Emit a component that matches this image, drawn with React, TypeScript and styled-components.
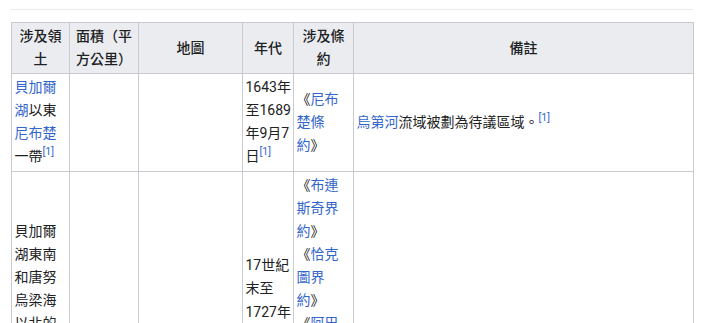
import React from "react";
import styled, { createGlobalStyle } from "styled-components";

const Global = createGlobalStyle`
  html, body { margin: 0; padding: 0; background: #ffffff; }
  body {
    font-family: Roboto, "Noto Sans CJK TC", "Noto Sans CJK SC", sans-serif;
    color: #202122;
    font-size: 14px;
  }
`;

const Page = styled.div`
  width: 683px;
  padding: 9px 0 0 10px;
`;

const Rule = styled.div`
  height: 1px;
  background: #eaecf0;
  margin-bottom: 12px;
`;

const Table = styled.table`
  margin-left: 1px;
  width: 682px;
  table-layout: fixed;
  border-collapse: collapse;
  background: #ffffff;
  font-size: 14px;
  line-height: 23.1px;
  color: #202122;
`;

const Th = styled.th`
  background: #eaecf0;
  border: 1px solid #c8ccd1;
  padding: 2px 2px;
  font-weight: 500;
  text-align: center;
  vertical-align: middle;
`;

const Td = styled.td`
  border: 1px solid #c8ccd1;
  padding: 2px 1.5px 2px 2.5px;
  vertical-align: middle;
  text-align: left;
`;

const Link = styled.a`
  color: #3366cc;
  text-decoration: none;
`;

const Ref = styled.sup`
  font-size: 10.5px;
  line-height: 1;
  vertical-align: super;
  color: #3366cc;
`;

const widths = [58, 69, 104, 51, 60, 340];

const Treaty: React.FC<{ name: string }> = ({ name }) => (
  <>
    《<Link href="#">{name}</Link>》
  </>
);

export default function App() {
  return (
    <>
      <Global />
      <Page>
        <Rule />
        <Table>
          <colgroup>
            {widths.map((w, i) => (
              <col key={i} style={{ width: w }} />
            ))}
          </colgroup>
          <thead>
            <tr>
              <Th>涉及領土</Th>
              <Th>面積（平方公里）</Th>
              <Th>地圖</Th>
              <Th>年代</Th>
              <Th>涉及條約</Th>
              <Th>備註</Th>
            </tr>
          </thead>
          <tbody>
            <tr>
              <Td>
                <Link href="#">貝加爾湖</Link>以東<Link href="#">尼布楚</Link>一帶
                <Ref>[1]</Ref>
              </Td>
              <Td />
              <Td />
              <Td>
                1643年至1689年9月7日<Ref>[1]</Ref>
              </Td>
              <Td>
                <Treaty name="尼布楚條約" />
              </Td>
              <Td>
                <Link href="#">烏第河</Link>流域被劃為待議區域。<Ref>[1]</Ref>
              </Td>
            </tr>
            <tr>
              <Td>
                貝加爾湖東南和唐努烏梁海以北的大片地區<Ref>[1]</Ref>
              </Td>
              <Td />
              <Td />
              <Td>
                17世紀末至1727年間<Ref>[1]</Ref>
              </Td>
              <Td>
                <Treaty name="布連斯奇界約" />
                <br />
                <Treaty name="恰克圖界約" />
                <br />
                <Treaty name="阿巴哈依圖界約" />
                <br />
                <Treaty name="庫倫界約" />
              </Td>
              <Td />
            </tr>
          </tbody>
        </Table>
      </Page>
    </>
  );
}
